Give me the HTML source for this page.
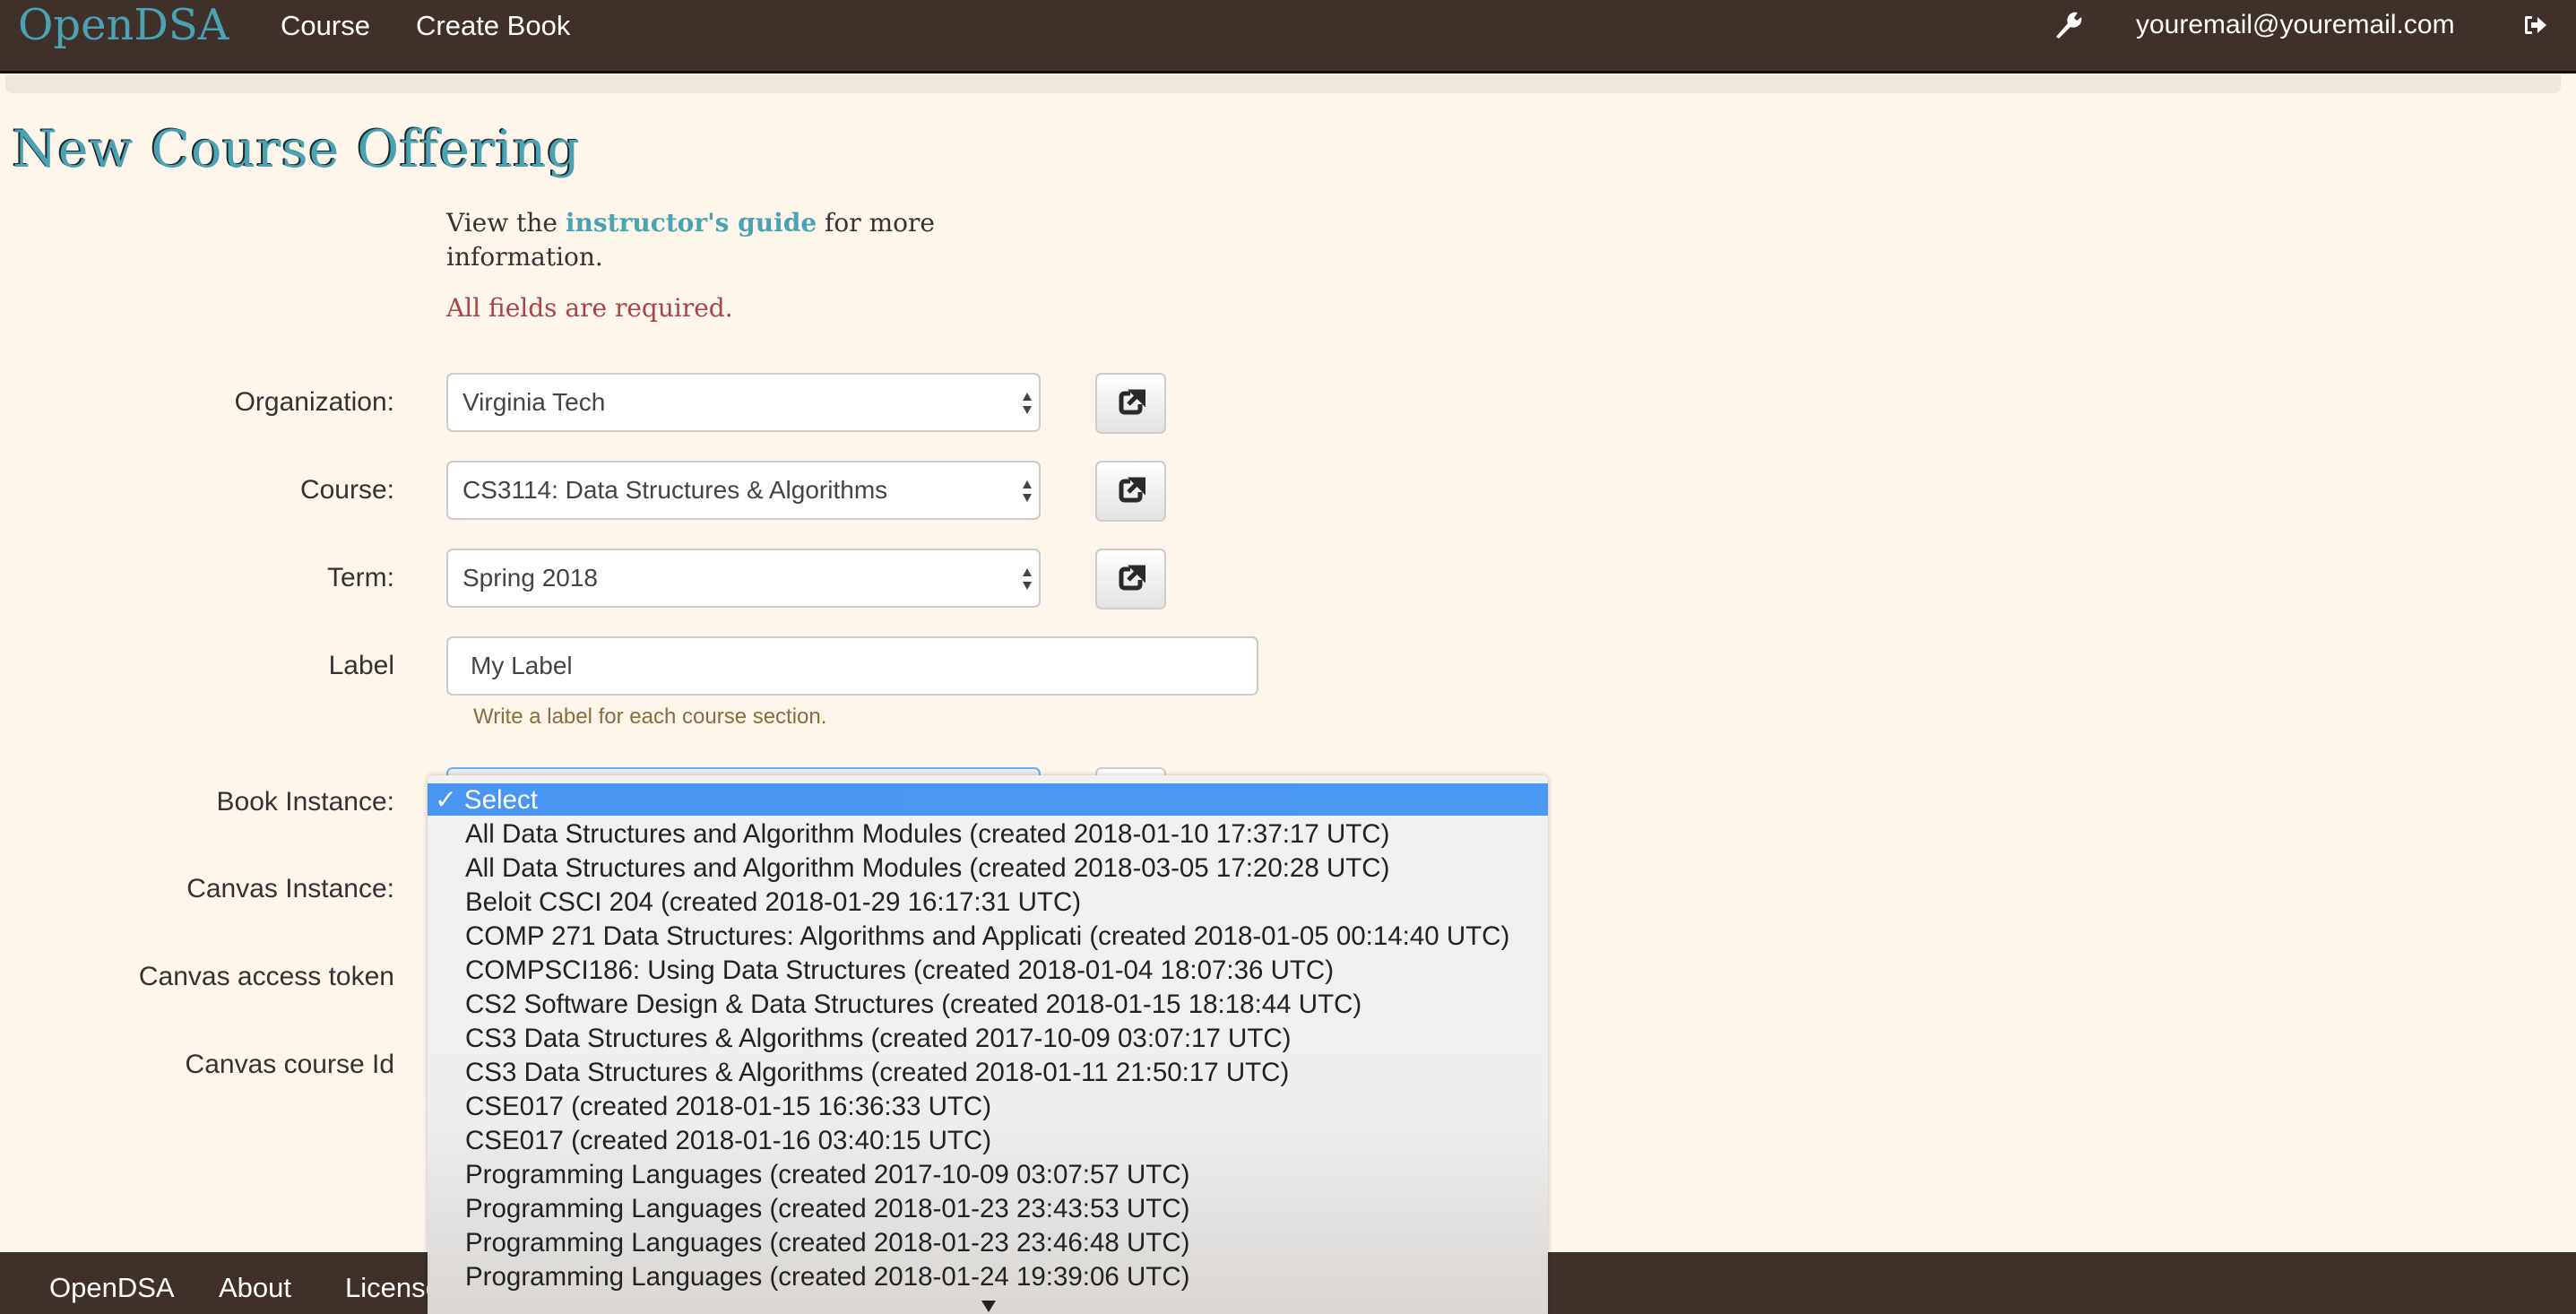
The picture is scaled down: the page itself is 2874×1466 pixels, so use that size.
<!DOCTYPE html>
<html><head><meta charset="utf-8"><style>
*{box-sizing:border-box;margin:0;padding:0}
body{width:2874px;height:1466px;overflow:hidden;background:#fef6eb;position:relative;font-family:"Liberation Sans",sans-serif;color:#333}
.abs{position:absolute;white-space:nowrap}
.nav{position:absolute;left:0;top:0;width:2874px;height:82px;background:#3f302a;border-bottom:3px solid #111}
.strip{position:absolute;left:6px;top:84px;width:2851px;height:20px;background:#efe5da;border-radius:0 0 8px 8px}
.navt{font-family:"Liberation Sans Narrow","Liberation Sans",sans-serif;color:#fff;font-size:31px;top:11px}
.serif{font-family:"DejaVu Serif","Liberation Serif",serif}
.lbl{font-family:"Liberation Sans Narrow","Liberation Sans",sans-serif;font-size:30px;color:#333;text-align:right;width:440px;left:0}
.sel{position:absolute;left:498px;width:663px;height:66px;background:#fff;border:2px solid #ccc;border-radius:7px;font-family:"Liberation Sans Narrow","Liberation Sans",sans-serif;font-size:28px;color:#444;padding:15px 0 0 16px}
.sel:after{content:"";position:absolute;right:8px;top:20px;width:0;height:0;border-left:5px solid transparent;border-right:5px solid transparent;border-bottom:9px solid #444}
.sel:before{content:"";position:absolute;right:8px;top:35px;width:0;height:0;border-left:5px solid transparent;border-right:5px solid transparent;border-top:9px solid #444}
.sel.noarr:after,.sel.noarr:before{display:none}
.btn{position:absolute;left:1222px;width:79px;height:68px;border:2px solid #ccc;border-radius:7px;background:linear-gradient(#fff,#e2e2e2)}
.btn svg{position:absolute;left:24px;top:16px}
.dd{position:absolute;left:477px;top:865px;width:1250px;height:601px;background:linear-gradient(#f1f1f1 0%,#efefef 60%,#d9d6d3 100%);box-shadow:0 0 6px rgba(0,0,0,.25);border-radius:6px 6px 0 0}
.it{position:absolute;left:42px;font-size:29.5px;color:#222;white-space:nowrap}
.footer{position:absolute;left:0;top:1397px;width:2874px;height:69px;background:#3f302a}
</style></head><body>
<div class="nav"></div>
<div class="strip"></div>
<div class="abs serif" style="left:20px;top:0px;font-size:48px;color:#4aa3b5">OpenDSA</div>
<div class="abs navt" style="left:313px">Course</div>
<div class="abs navt" style="left:464px">Create Book</div>
<svg class="abs" style="left:2290px;top:12px" width="36" height="32" viewBox="0 0 36 32"><path d="M4 29 L17 14 A9 9 0 0 1 28 2 L24 8 L27 11 L32 7 A9 9 0 0 1 20 18 L7 31 Z" fill="#fff"/></svg>
<div class="abs" style="left:2383px;top:11px;font-size:30px;color:#fff;font-family:'Liberation Sans Narrow','Liberation Sans',sans-serif">youremail@youremail.com</div>
<svg class="abs" style="left:2815px;top:16px" width="28" height="24" viewBox="0 0 28 24"><path d="M10 2 H4 Q2 2 2 4 V20 Q2 22 4 22 H10 V19 H5 V5 H10 Z" fill="#fff"/><path d="M9 9 H16 V3 L26 12 L16 21 V15 H9 Z" fill="#fff"/></svg>

<div class="abs serif" style="left:14px;top:134px;font-size:57px;color:#4aa3b5;text-shadow:-2px -1px 0 #222;letter-spacing:1px">New Course Offering</div>
<div class="abs serif" style="left:498px;top:232px;font-size:28px;color:#333">View the <b style="color:#4aa3b5">instructor's guide</b> for more</div>
<div class="abs serif" style="left:498px;top:270px;font-size:28px;color:#333">information.</div>
<div class="abs serif" style="left:498px;top:327px;font-size:28px;color:#a94442">All fields are required.</div>

<div class="abs lbl" style="top:432px">Organization:</div>
<div class="sel" style="top:416px">Virginia Tech</div>
<div class="btn" style="top:416px"><svg width="30" height="30" viewBox="0 0 30 30"><path d="M13 5 H7 Q3 5 3 9 V22 Q3 26 7 26 H20 Q24 26 24 22 V17" fill="none" stroke="#2a2a2a" stroke-width="5"/><path d="M11 17 L22 6 M16 3 H28 V15 Z" stroke="#2a2a2a" stroke-width="5" fill="#2a2a2a"/></svg></div>

<div class="abs lbl" style="top:530px">Course:</div>
<div class="sel" style="top:514px">CS3114: Data Structures &amp; Algorithms</div>
<div class="btn" style="top:514px"><svg width="30" height="30" viewBox="0 0 30 30"><path d="M13 5 H7 Q3 5 3 9 V22 Q3 26 7 26 H20 Q24 26 24 22 V17" fill="none" stroke="#2a2a2a" stroke-width="5"/><path d="M11 17 L22 6 M16 3 H28 V15 Z" stroke="#2a2a2a" stroke-width="5" fill="#2a2a2a"/></svg></div>

<div class="abs lbl" style="top:628px">Term:</div>
<div class="sel" style="top:612px">Spring 2018</div>
<div class="btn" style="top:612px"><svg width="30" height="30" viewBox="0 0 30 30"><path d="M13 5 H7 Q3 5 3 9 V22 Q3 26 7 26 H20 Q24 26 24 22 V17" fill="none" stroke="#2a2a2a" stroke-width="5"/><path d="M11 17 L22 6 M16 3 H28 V15 Z" stroke="#2a2a2a" stroke-width="5" fill="#2a2a2a"/></svg></div>

<div class="abs lbl" style="top:726px">Label</div>
<div class="sel noarr" style="top:710px;width:906px;padding-left:25px">My Label</div>
<div class="abs" style="left:528px;top:786px;font-size:24px;color:#8a6d3b;font-family:'Liberation Sans Narrow','Liberation Sans',sans-serif">Write a label for each course section.</div>

<div class="abs lbl" style="top:878px">Book Instance:</div>
<div class="abs" style="left:498px;top:856px;width:663px;height:20px;border:2px solid #66afe9;border-bottom:none;border-radius:7px 7px 0 0;background:#eee"></div>
<div class="abs" style="left:1222px;top:856px;width:79px;height:20px;border:2px solid #ccc;border-bottom:none;border-radius:7px 7px 0 0;background:#fff"></div>
<div class="abs lbl" style="top:975px">Canvas Instance:</div>
<div class="abs lbl" style="top:1073px">Canvas access token</div>
<div class="abs lbl" style="top:1171px">Canvas course Id</div>

<div class="footer"></div>
<div class="abs navt" style="left:55px;top:1419px">OpenDSA</div>
<div class="abs navt" style="left:244px;top:1419px">About</div>
<div class="abs navt" style="left:385px;top:1419px">License</div>

<div class="dd">
<div style="position:absolute;left:0;top:9px;width:1250px;height:36px;background:linear-gradient(90deg,#4a94f2,#4a9af5)"></div>
<div class="it" style="left:8px;top:10px;color:#fff">✓ Select</div>
<div class="it" style="top:49px">All Data Structures and Algorithm Modules (created 2018-01-10 17:37:17 UTC)</div>
<div class="it" style="top:87px">All Data Structures and Algorithm Modules (created 2018-03-05 17:20:28 UTC)</div>
<div class="it" style="top:125px">Beloit CSCI 204 (created 2018-01-29 16:17:31 UTC)</div>
<div class="it" style="top:163px">COMP 271 Data Structures: Algorithms and Applicati (created 2018-01-05 00:14:40 UTC)</div>
<div class="it" style="top:201px">COMPSCI186: Using Data Structures (created 2018-01-04 18:07:36 UTC)</div>
<div class="it" style="top:239px">CS2 Software Design &amp; Data Structures (created 2018-01-15 18:18:44 UTC)</div>
<div class="it" style="top:277px">CS3 Data Structures &amp; Algorithms (created 2017-10-09 03:07:17 UTC)</div>
<div class="it" style="top:315px">CS3 Data Structures &amp; Algorithms (created 2018-01-11 21:50:17 UTC)</div>
<div class="it" style="top:353px">CSE017 (created 2018-01-15 16:36:33 UTC)</div>
<div class="it" style="top:391px">CSE017 (created 2018-01-16 03:40:15 UTC)</div>
<div class="it" style="top:429px">Programming Languages (created 2017-10-09 03:07:57 UTC)</div>
<div class="it" style="top:467px">Programming Languages (created 2018-01-23 23:43:53 UTC)</div>
<div class="it" style="top:505px">Programming Languages (created 2018-01-23 23:46:48 UTC)</div>
<div class="it" style="top:543px">Programming Languages (created 2018-01-24 19:39:06 UTC)</div>
<div style="position:absolute;left:618px;top:586px;width:0;height:0;border-left:8px solid transparent;border-right:8px solid transparent;border-top:13px solid #222"></div>
</div>
</body></html>
